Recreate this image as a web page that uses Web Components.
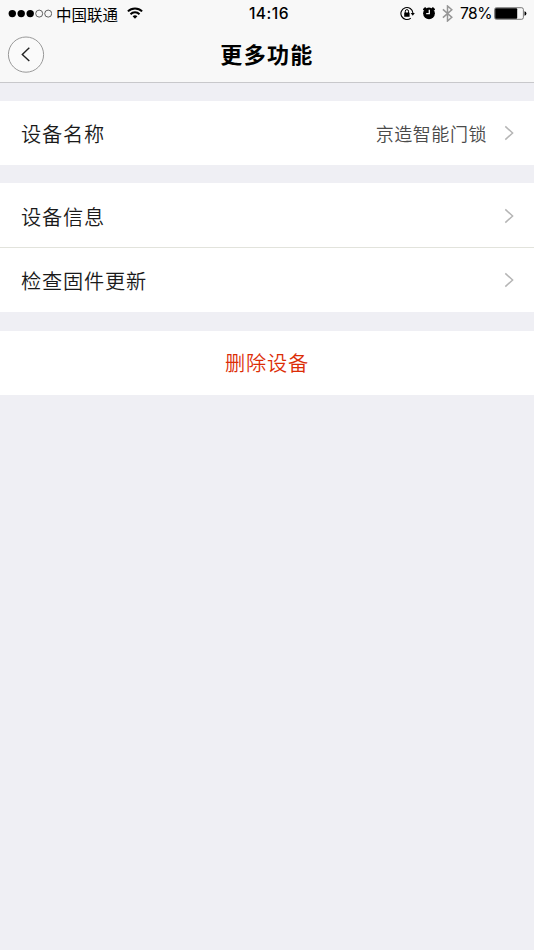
<!DOCTYPE html>
<html lang="zh-CN">
<head>
<meta charset="utf-8">
<title>更多功能</title>
<style>
html,body{margin:0;height:100%;background:#efeff4}
body{font-family:"Inter","Noto Sans CJK SC",sans-serif;color:#1a1a1a}
</style>
</head>
<body>
<settings-screen></settings-screen>
<script>
function define(name, html){
  const t=document.createElement('template');
  t.innerHTML=html;
  customElements.define(name,class extends HTMLElement{
    constructor(){super();this.attachShadow({mode:'open'}).appendChild(t.content.cloneNode(true));}
  });
}
define('status-bar',`<style>
:host{display:grid;grid-template-columns:1fr auto 1fr;height:27px;align-items:center;color:#000;font-size:15.5px;line-height:26px}
.l,.r{display:flex;align-items:center}
.l{padding-left:8px}
.r{justify-content:flex-end;padding-right:7px}
svg{display:block;flex:none}
.carrier{margin-left:4px;font-family:"Noto Sans CJK SC",sans-serif;font-size:15.5px;width:63px;white-space:nowrap}
.wifi{margin-left:8px;margin-top:-1px}
.time{font-weight:500;font-size:15.6px;letter-spacing:.5px;padding:1px 0 0 4px}
.pct{font-size:15.6px;letter-spacing:-.5px;width:31px;margin:1px 3px 0 7px;white-space:nowrap}
</style>
<div class="l">
<svg width="44" height="10" viewBox="0 0 44 10"><g><circle cx="4.3" cy="4.6" r="3.7"/><circle cx="13.2" cy="4.6" r="3.7"/><circle cx="22.2" cy="4.6" r="3.7"/></g><g fill="none" stroke="#222" stroke-width=".7"><circle cx="31.2" cy="4.6" r="3.5"/><circle cx="40.2" cy="4.6" r="3.5"/></g></svg>
<span class="carrier">中国联通</span>
<svg class="wifi" width="16" height="12" viewBox="0 0 16 12"><g fill="none" stroke="#000" stroke-width="2"><path d="M.9 4.4a10.1 10.1 0 0 1 14.2 0"/><path d="M3.5 7.2a6.4 6.4 0 0 1 9 0"/></g><path d="M8 11.8 5.6 9.3a3.5 3.5 0 0 1 4.8 0z"/></svg>
</div>
<span class="time">14:16</span>
<div class="r">
<svg style="margin-top:-1px" width="15" height="15" viewBox="0 0 15 15"><path d="M12.9 7A6 6 0 1 0 10.8 12.1" fill="none" stroke="#000" stroke-width="1.1"/><path d="M10.7 7h4.1l-2 2.8z"/><rect x="4.2" y="6.6" width="5.4" height="4.2" rx=".4"/><path d="M5.3 7V5.2a1.6 1.6 0 0 1 3.2 0V7" fill="none" stroke="#000" stroke-width="1"/></svg>
<svg style="margin-left:7px;margin-top:-1px" width="14" height="14" viewBox="0 0 14 14"><circle cx="7" cy="7.3" r="5.9"/><path d="M3.2 2.2 2 3.4M10.8 2.2l1.2 1.2" stroke="#000" stroke-width="2" stroke-linecap="round"/><path d="M7.3 3.7v3.9H4.2" fill="none" stroke="#f8f8f8" stroke-width="1.3"/></svg>
<svg style="margin-left:6px;margin-top:-1px" width="11" height="17" viewBox="0 0 11 17"><path d="M.9 4.4 9.8 12.3 5.5 16V1l4.3 3.7L.9 12.6" fill="none" stroke="#969696" stroke-width="1.5"/></svg>
<span class="pct">78%</span>
<svg style="margin-top:-1px" width="33" height="13" viewBox="0 0 33 13"><rect x=".6" y=".7" width="28.8" height="11.6" rx="1.8" fill="none" stroke="#444" stroke-width=".7"/><rect x="1.2" y="1.2" width="22" height="10.6" rx="1"/><path d="M30.5 4.2q1.9.5 1.9 2.3t-1.9 2.3z"/></svg>
</div>`);
define('nav-bar',`<style>
:host{display:grid;grid-template-columns:52px 1fr 52px;height:55px;align-items:center;border-bottom:1px solid #c8c8cb}
svg{display:block;margin-left:7px}
h1{margin:0 0 4px;text-align:center;font:700 22px/30px "Noto Sans CJK SC",sans-serif;letter-spacing:1.35px;color:#000}
</style>
<svg width="38" height="38" viewBox="0 0 38 38"><circle cx="19" cy="18.6" r="17.6" fill="#fafafa" stroke="#999" stroke-width="1"/><path d="M22.3 11.7 15.3 18.4l7 6.7" fill="none" stroke="#222" stroke-width="1.4"/></svg>
<h1><slot></slot></h1>`);
define('cell-group',`<style>
:host{display:block;background:#fff;margin-top:18px}
::slotted(:not(:first-child)){border-top:1px solid #e2e3dc}
</style><slot></slot>`);
define('chevron-icon',`<style>:host{display:block;margin-left:17px}svg{display:block}</style>
<svg width="10" height="16" viewBox="0 0 10 16"><path d="M1.3 1.4 8.6 8l-7.3 6.6" fill="none" stroke="#b5b5b5" stroke-width="1.5"/></svg>`);
const cellText='font:350 20.2px/30px "Noto Sans CJK SC",sans-serif;letter-spacing:.8px;';
define('list-cell',`<style>
:host{display:flex;height:64px;align-items:center;padding:0 20px 0 21px;${cellText}}
.label{flex:1;padding-top:1px}
.value{font-size:18px;letter-spacing:.55px;color:#4a4a4a}
</style><span class="label"><slot></slot></span><span class="value"><slot name="value"></slot></span><chevron-icon></chevron-icon>`);
define('action-cell',`<style>
:host{display:flex;height:64px;align-items:center;justify-content:center;color:#dc2d06;${cellText}}
</style><slot></slot>`);
define('settings-screen',`<style>
:host{display:block;min-height:100vh;background:#efeff4}
header{background:#f8f8f8}
.info{box-sizing:border-box;height:64px;padding-top:2px}
.actions{margin-top:19px}
</style>
<header><status-bar></status-bar><nav-bar>更多功能</nav-bar></header>
<main>
<cell-group><list-cell>设备名称<span slot="value">京造智能门锁</span></list-cell></cell-group>
<cell-group><list-cell class="info">设备信息</list-cell><list-cell>检查固件更新</list-cell></cell-group>
<cell-group class="actions"><action-cell>删除设备</action-cell></cell-group>
</main>`);
</script>
</body>
</html>
